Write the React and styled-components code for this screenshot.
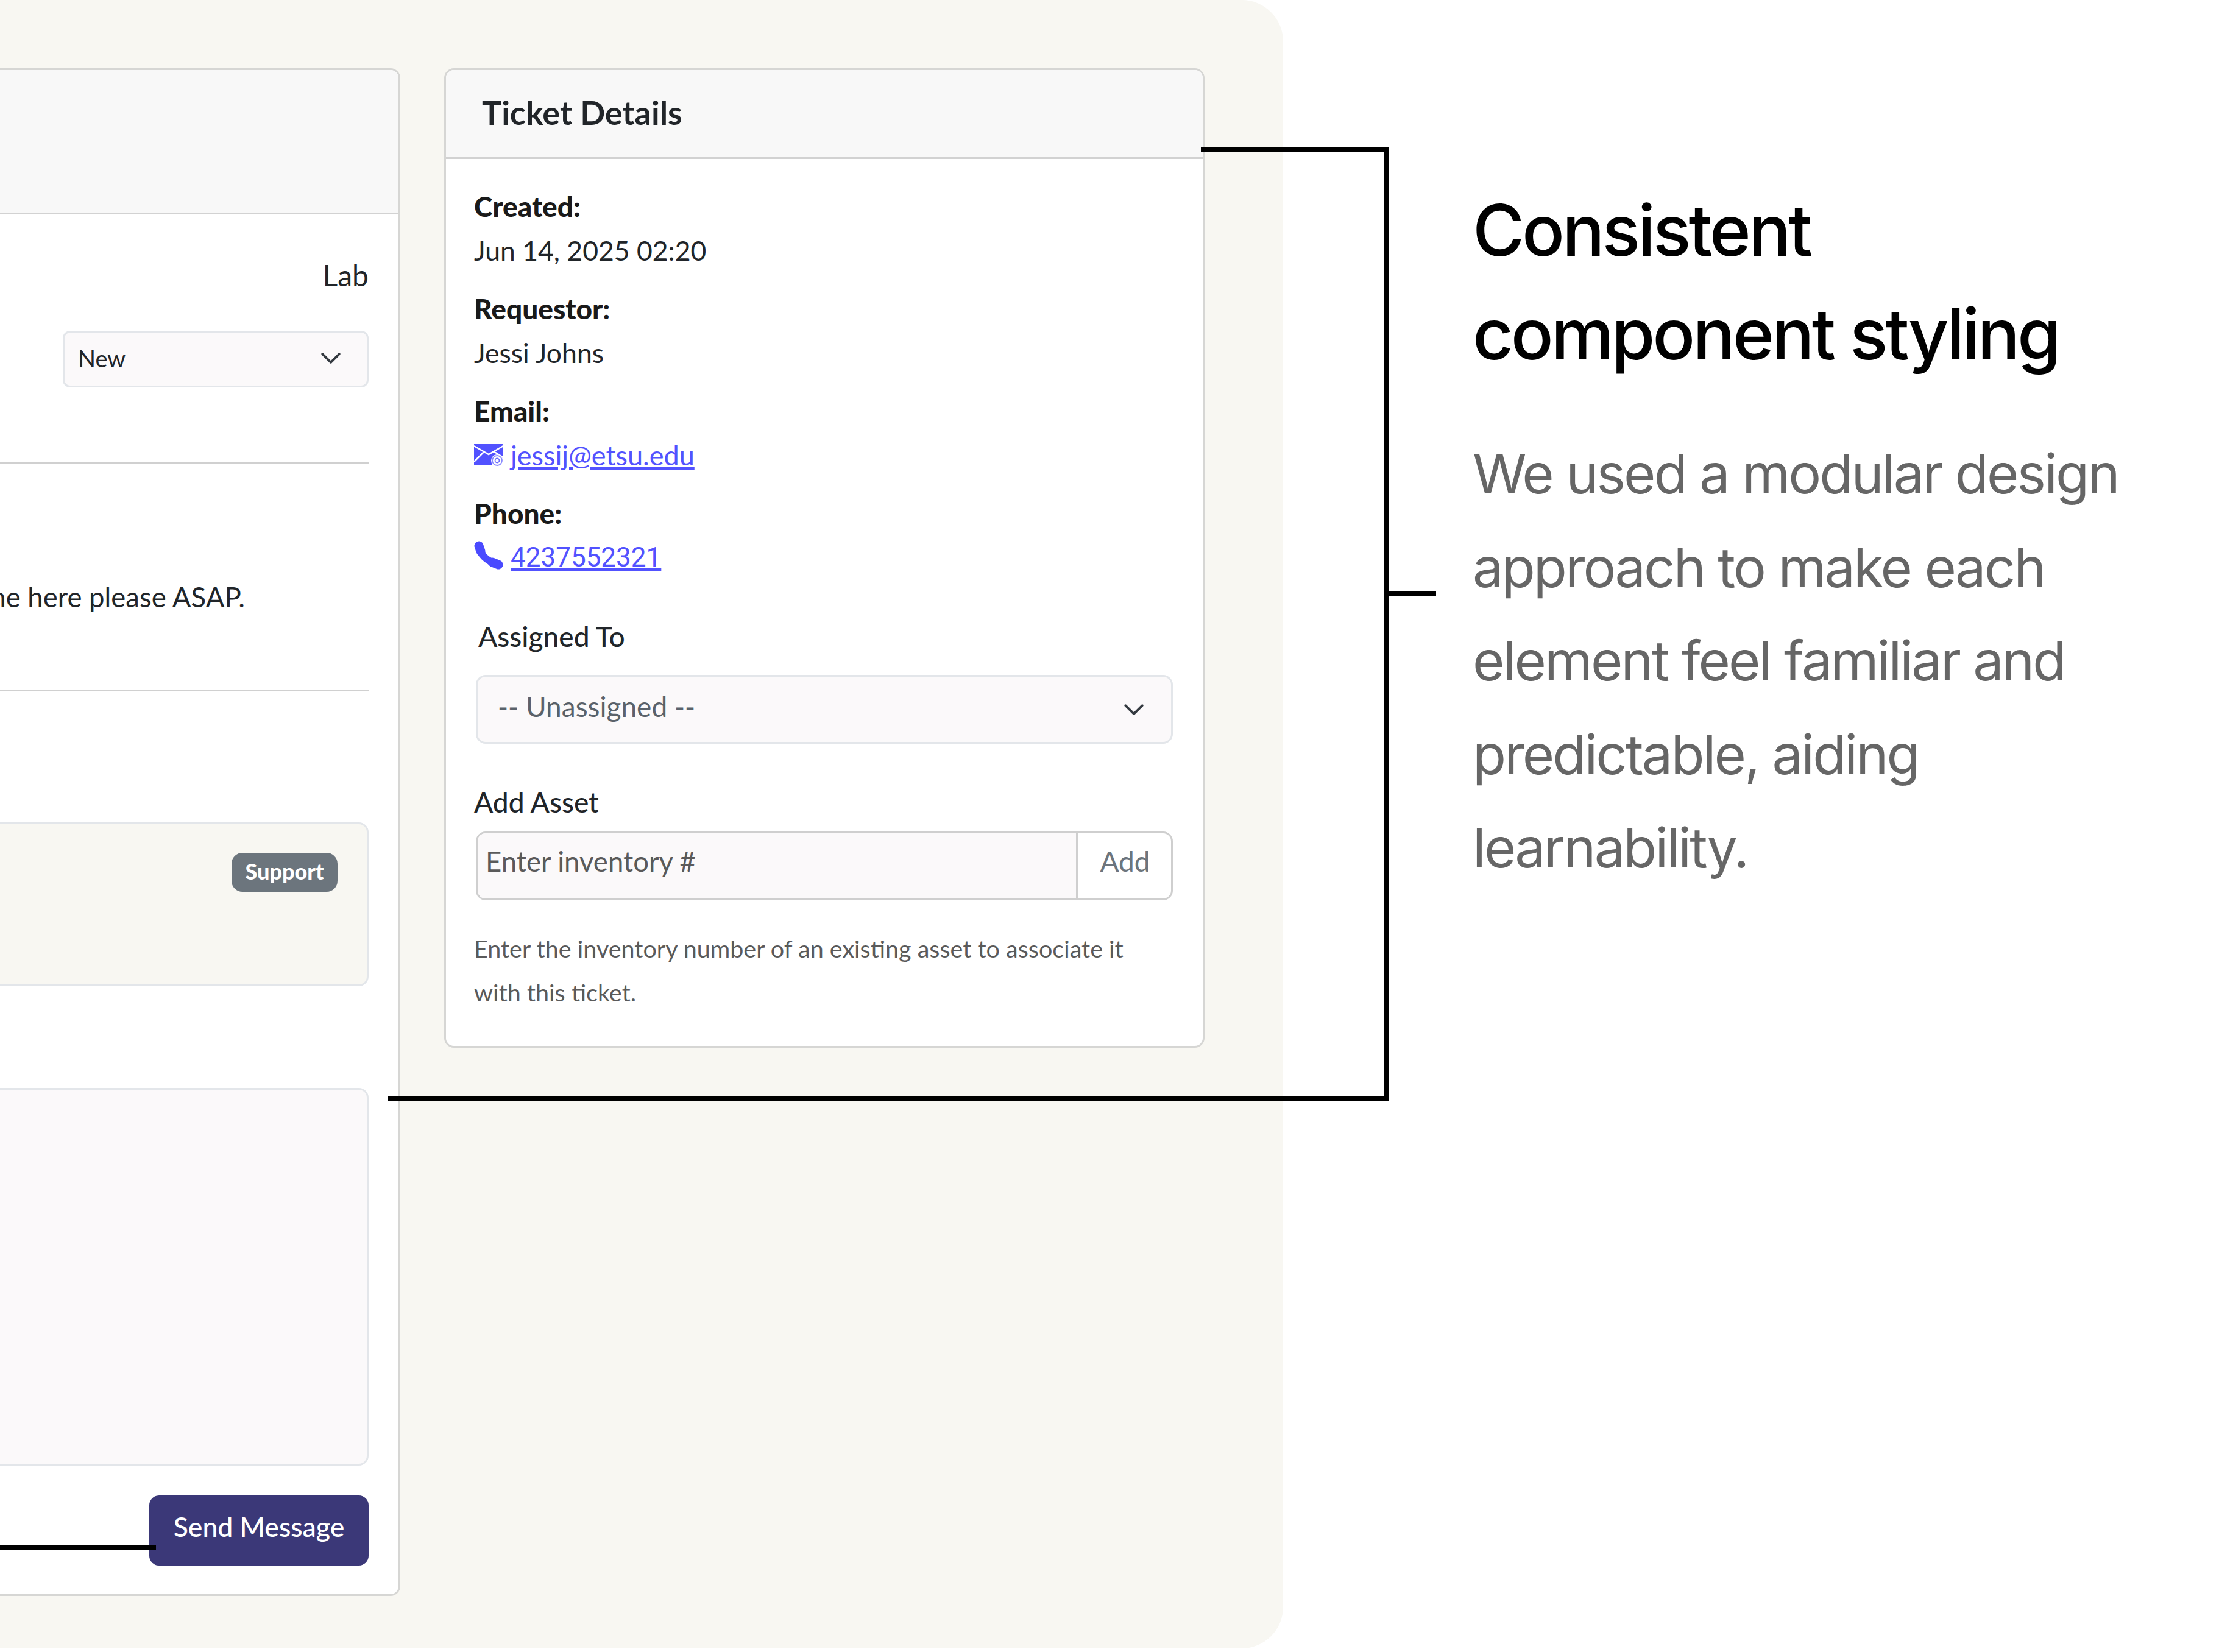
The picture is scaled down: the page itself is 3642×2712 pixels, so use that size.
import React from "react";
import styled, { createGlobalStyle } from "styled-components";

const UI_FONT = `"Lato", "Noto Sans", sans-serif`;

const GlobalStyle = createGlobalStyle`
  html, body {
    margin: 0;
    padding: 0;
    background: #ffffff;
  }
  * {
    box-sizing: border-box;
  }
`;

const CONNECTORS = [
  { left: 1971, top: 242, width: 308, height: 8 },
  { left: 2271, top: 242, width: 8, height: 1566 },
  { left: 636, top: 1799, width: 1643, height: 9 },
  { left: 2279, top: 970, width: 78, height: 8 },
  { left: 0, top: 2536, width: 256, height: 9 },
];

const Chevron = ({ size }) => (
  <ChevronIcon $size={size} viewBox="0 0 16 16" aria-hidden="true">
    <path d="M1.5 4.8 8 11.2l6.500-6.400" />
  </ChevronIcon>
);

const MailIcon = () => (
  <LinkIcon viewBox="0 0 48 36" width="48" height="36" aria-hidden="true">
    <path d="M0 0h48v30H30v4H0z" fill="#5252ff" />
    <path
      d="M0 3l24 14L48 3M0 29l17-17M48 22L32 12"
      fill="none"
      stroke="#fff"
      strokeWidth="2.500"
    />
    <circle cx="38" cy="27" r="10" fill="#fff" />
    <circle cx="38" cy="27" r="8" fill="none" stroke="#8a8aff" strokeWidth="1.800" />
    <circle cx="38" cy="27" r="3.500" fill="none" stroke="#6a6aff" strokeWidth="1.800" />
  </LinkIcon>
);

const PhoneIcon = () => (
  <RaisedIcon viewBox="0 0 48 48" width="48" height="48" aria-hidden="true">
    <path
      d="M8 9C9 19 17 31 40 40"
      fill="none"
      stroke="#4a4aff"
      strokeWidth="12"
      strokeLinecap="round"
    />
    <path
      d="M8 8l3 9M30 35l10 4"
      fill="none"
      stroke="#4a4aff"
      strokeWidth="15"
      strokeLinecap="round"
    />
  </RaisedIcon>
);

const App = () => {
  return (
    <Page>
      <GlobalStyle />
      <Panel>
        <ConversationCard>
          <CardHeader $height={237} />
          <ConversationBody>
            <Location>Lab</Location>
            <StatusSelect>
              <span>New</span>
              <Chevron size={34} />
            </StatusSelect>
            <Divider $top={122} />
            <MessageText>Need someone here please ASAP.</MessageText>
            <Divider $top={127} />
            <ReplyBox>
              <Badge>Support</Badge>
            </ReplyBox>
            <MessageArea />
            <SendButton>Send Message</SendButton>
          </ConversationBody>
        </ConversationCard>

        <DetailsCard>
          <CardHeader $height={146}>
            <CardTitle>Ticket Details</CardTitle>
          </CardHeader>
          <DetailsBody>
            <DetailGroup>
              <DetailLabel>Created:</DetailLabel>
              <DetailValue>Jun 14, 2025 02:20</DetailValue>
            </DetailGroup>
            <DetailGroup>
              <DetailLabel>Requestor:</DetailLabel>
              <DetailValue>Jessi Johns</DetailValue>
            </DetailGroup>
            <DetailGroup>
              <DetailLabel>Email:</DetailLabel>
              <DetailValue>
                <MailIcon />
                <ContactLink href="#email">jessij@etsu.edu</ContactLink>
              </DetailValue>
            </DetailGroup>
            <DetailGroup>
              <DetailLabel>Phone:</DetailLabel>
              <DetailValue>
                <PhoneIcon />
                <ContactLink href="#phone" $digits>
                  4237552321
                </ContactLink>
              </DetailValue>
            </DetailGroup>

            <AssignedLabel>Assigned To</AssignedLabel>
            <AssignedSelect>
              <span>-- Unassigned --</span>
              <Chevron size={34} />
            </AssignedSelect>

            <AssetLabel>Add Asset</AssetLabel>
            <AssetGroup>
              <AssetInput>Enter inventory #</AssetInput>
              <AssetButton>Add</AssetButton>
            </AssetGroup>
            <HelpText>
              Enter the inventory number of an existing asset to associate it
              <br />
              with this ticket.
            </HelpText>
          </DetailsBody>
        </DetailsCard>
      </Panel>

      <Annotation>
        <Heading>
          Consistent
          <br />
          component styling
        </Heading>
        <Description>
          We used a modular design
          <br />
          approach to make each
          <br />
          element feel familiar and
          <br />
          predictable, aiding
          <br />
          learnability.
        </Description>
      </Annotation>

      {CONNECTORS.map((line) => (
        <ConnectorLine
          key={`${line.left}-${line.top}`}
          $left={line.left}
          $top={line.top}
          $width={line.width}
          $height={line.height}
        />
      ))}
    </Page>
  );
};

export default App;

const Page = styled.div`
  position: relative;
  display: flex;
  width: 3642px;
  height: 2712px;
  overflow: hidden;
  background: #ffffff;
`;

const Panel = styled.div`
  display: flex;
  flex: 0 0 2106px;
  justify-content: flex-end;
  align-items: flex-start;
  gap: 72px;
  height: 2706px;
  padding: 112px 129px 0 0;
  overflow: hidden;
  background: #f8f7f2;
  border-radius: 0 68px 68px 0;
  font-family: ${UI_FONT};
  color: #212529;
`;

const Card = styled.section`
  flex-shrink: 0;
  display: flex;
  flex-direction: column;
  background: #ffffff;
  border: 3px solid #d6d6d4;
  border-radius: 16px;
  overflow: hidden;
`;

const ConversationCard = styled(Card)`
  width: 1200px;
  height: 2508px;
`;

const DetailsCard = styled(Card)`
  width: 1248px;
  height: 1608px;
`;

const CardHeader = styled.header`
  display: flex;
  align-items: center;
  flex-shrink: 0;
  height: ${(props) => props.$height}px;
  padding: 0 0 4px 59px;
  background: #f8f8f8;
  border-bottom: 3px solid #d2d2d2;
`;

const CardTitle = styled.h2`
  margin: 0;
  font-size: 54px;
  font-weight: 700;
  color: #212529;
`;

const ConversationBody = styled.div`
  display: flex;
  flex-direction: column;
  align-items: flex-end;
  padding: 75px 49px 0 0;
`;

const Location = styled.div`
  font-size: 48px;
  line-height: 50px;
`;

const StatusSelect = styled.div`
  display: flex;
  align-items: center;
  justify-content: space-between;
  width: 502px;
  height: 93px;
  margin-top: 66px;
  padding: 0 42px 4px 22px;
  background: #fbf9fa;
  border: 3px solid #e3e6ea;
  border-radius: 12px;
  font-size: 38px;
`;

const ChevronIcon = styled.svg`
  width: ${(props) => props.$size}px;
  height: ${(props) => props.$size}px;
  flex-shrink: 0;

  path {
    fill: none;
    stroke: #343a40;
    stroke-width: 1.800;
    stroke-linecap: round;
    stroke-linejoin: round;
  }
`;

const Divider = styled.hr`
  width: 100%;
  height: 3px;
  margin: ${(props) => props.$top}px 0 0;
  border: 0;
  background: #d0d0d0;
`;

const MessageText = styled.p`
  margin: 194px 203px 0 0;
  font-size: 45.5px;
  line-height: 50px;
  white-space: nowrap;
`;

const ReplyBox = styled.div`
  display: flex;
  justify-content: flex-end;
  align-items: flex-start;
  width: 100%;
  height: 269px;
  margin-top: 215px;
  padding: 47px 48px 0 0;
  background: #f8f7f2;
  border: 3px solid #e3e6ea;
  border-radius: 16px;
`;

const Badge = styled.span`
  display: flex;
  align-items: center;
  justify-content: center;
  width: 174px;
  height: 64px;
  padding-bottom: 4px;
  background: #6c757d;
  border-radius: 18px;
  color: #ffffff;
  font-size: 36px;
  font-weight: 900;
`;

const MessageArea = styled.div`
  width: 100%;
  height: 620px;
  margin-top: 167px;
  background: #fbf9fa;
  border: 3px solid #e3e6ea;
  border-radius: 16px;
`;

const SendButton = styled.button`
  width: 360px;
  height: 115px;
  margin-top: 49px;
  padding: 0 0 14px;
  background: #3b3878;
  border: 0;
  border-radius: 16px;
  color: #ffffff;
  font-family: ${UI_FONT};
  font-size: 44.5px;
  font-weight: 500;
`;

const DetailsBody = styled.div`
  display: flex;
  flex-direction: column;
  padding: 42px 49px 0 46px;
`;

const DetailGroup = styled.div`
  margin-bottom: 24px;
`;

const DetailLabel = styled.div`
  font-size: 46px;
  font-weight: 900;
  line-height: 72px;
  color: #1a1a1a;
`;

const DetailValue = styled.div`
  display: flex;
  align-items: center;
  gap: 12px;
  height: 72px;
  font-size: 44.5px;
  line-height: 72px;
`;

const LinkIcon = styled.svg`
  flex-shrink: 0;
`;

const RaisedIcon = styled(LinkIcon)`
  margin-bottom: 6px;
`;

const ContactLink = styled.a`
  color: #5252ff;
  text-decoration: underline;
  font-family: ${(props) => (props.$digits ? `"Roboto", sans-serif` : UI_FONT)};
  font-size: ${(props) => (props.$digits ? "44px" : "45px")};
`;

const AssignedLabel = styled.label`
  margin: 34px 0 0 7px;
  font-size: 46px;
  font-weight: 500;
  line-height: 72px;
`;

const AssignedSelect = styled.div`
  display: flex;
  align-items: center;
  justify-content: space-between;
  height: 113px;
  margin: 27px 0 0 3px;
  padding: 0 44px 0 33px;
  background: #fbf9fa;
  border: 3px solid #e3e6ea;
  border-radius: 16px;
  color: #5a626a;
  font-size: 46px;

  span {
    padding-bottom: 10px;
  }
`;

const AssetLabel = styled.label`
  margin-top: 60px;
  font-size: 46px;
  font-weight: 500;
  line-height: 72px;
`;

const AssetGroup = styled.div`
  display: flex;
  height: 113px;
  margin: 12px 0 0 3px;
  background: #ffffff;
  border: 3px solid #cfcfcf;
  border-radius: 16px;
  overflow: hidden;
`;

const AssetInput = styled.div`
  flex: 1;
  padding: 18px 0 0 13px;
  background: #fbf9fa;
  border-right: 3px solid #cfcfcf;
  color: #5a5a5a;
  font-size: 45.5px;
`;

const AssetButton = styled.div`
  flex: 0 0 153px;
  padding: 18px 0 0 2px;
  text-align: center;
  color: #6c757d;
  font-size: 46px;
`;

const HelpText = styled.p`
  margin: 43px 0 0;
  font-size: 39.5px;
  line-height: 72px;
  color: #5a5a5a;
`;

const Annotation = styled.aside`
  padding: 293px 0 0 311px;
  font-family: "Inter", sans-serif;
  white-space: nowrap;
`;

const Heading = styled.h1`
  margin: 0;
  font-size: 116px;
  font-weight: 500;
  line-height: 170px;
  letter-spacing: -4.1px;
  color: #000000;
`;

const Description = styled.p`
  margin: 68px 0 0;
  font-size: 90px;
  font-weight: 400;
  line-height: 153.500px;
  letter-spacing: -2.9px;
  color: #666666;
`;

const ConnectorLine = styled.div`
  position: absolute;
  left: ${(props) => props.$left}px;
  top: ${(props) => props.$top}px;
  width: ${(props) => props.$width}px;
  height: ${(props) => props.$height}px;
  background: #000000;
`;
